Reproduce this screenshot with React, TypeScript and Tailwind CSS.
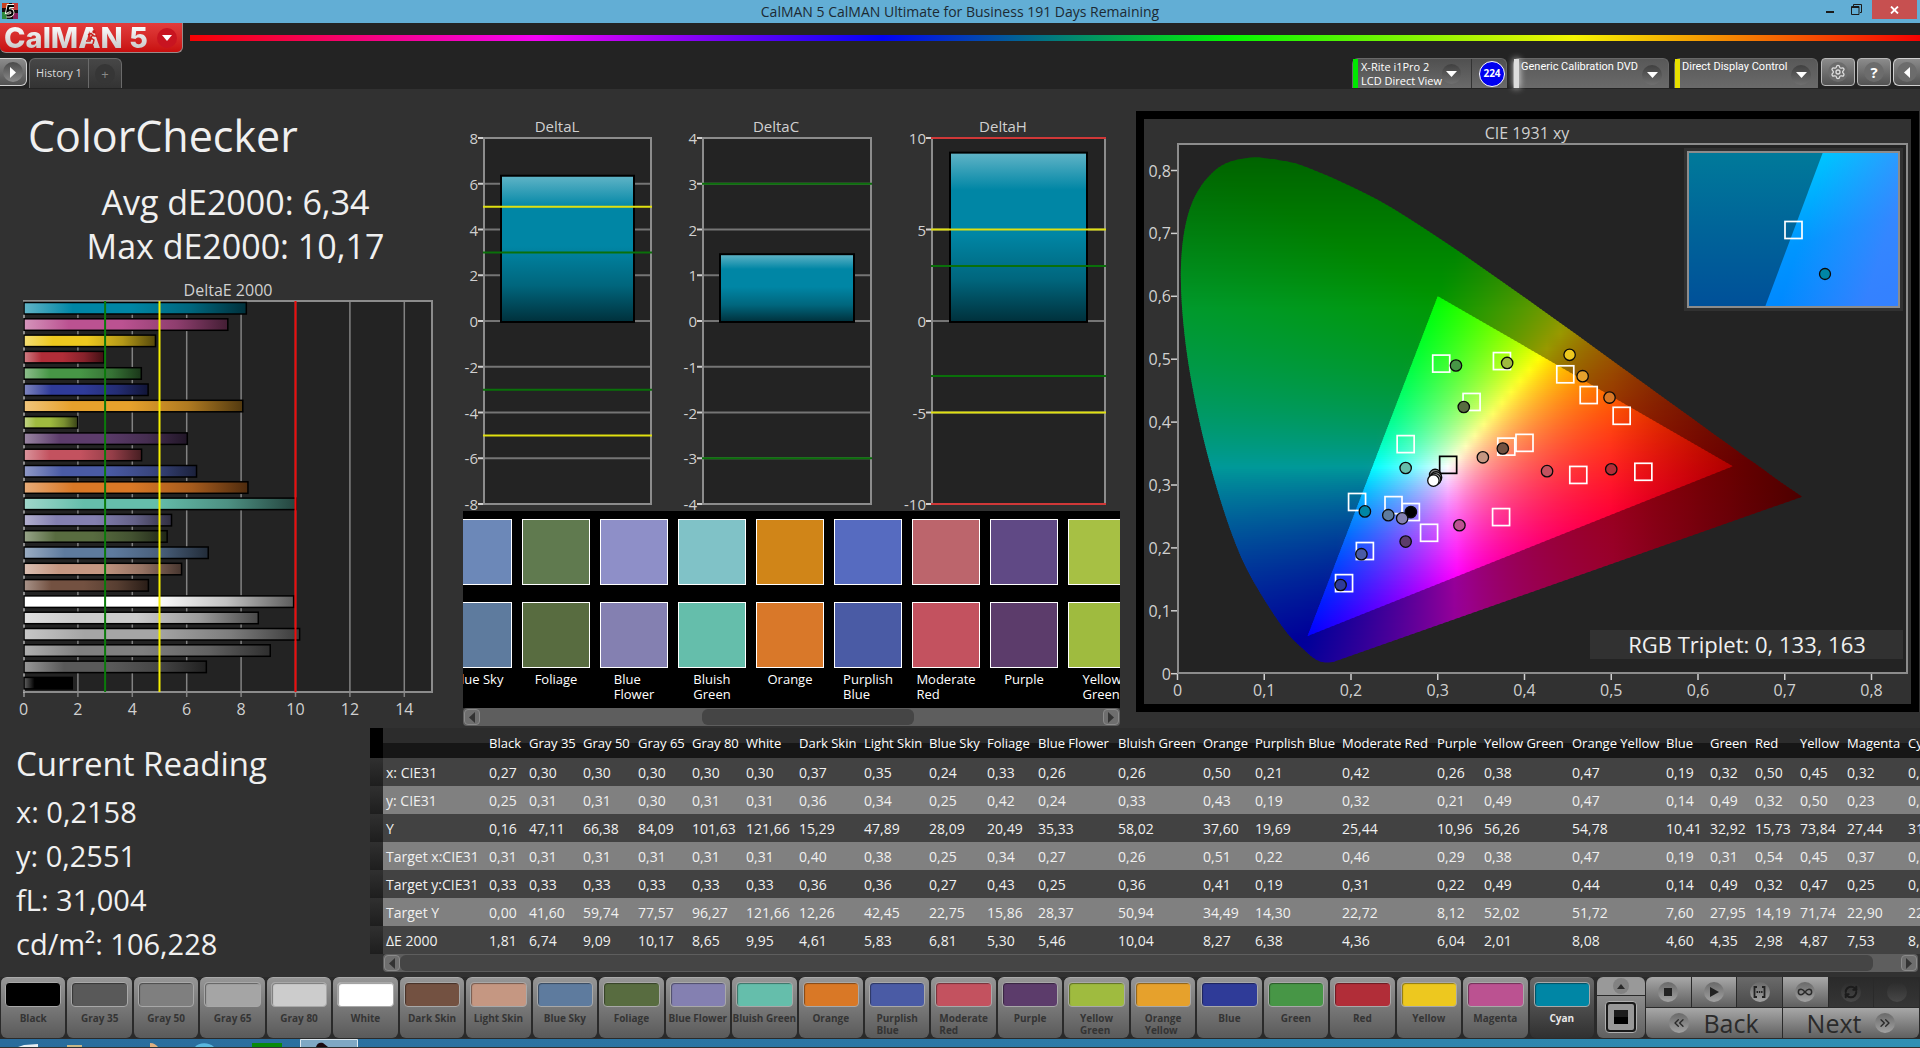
import type { ReactNode } from 'react';
import { ChevronsLeft, ChevronsRight, Infinity as InfinityIcon, RefreshCw, Settings } from 'lucide-react';

type Patch = {
    name: string;
    color: string;
    // x, y, Y, target x, target y, target Y, dE2000
    values: string[];
};

const PATCHES: Patch[] = [
    { name: 'Black', color: '#000000', values: ['0,27', '0,25', '0,16', '0,31', '0,33', '0,00', '1,81'] },
    { name: 'Gray 35', color: '#595959', values: ['0,30', '0,31', '47,11', '0,31', '0,33', '41,60', '6,74'] },
    { name: 'Gray 50', color: '#7f7f7f', values: ['0,30', '0,31', '66,38', '0,31', '0,33', '59,74', '9,09'] },
    { name: 'Gray 65', color: '#a5a5a5', values: ['0,30', '0,30', '84,09', '0,31', '0,33', '77,57', '10,17'] },
    { name: 'Gray 80', color: '#cccccc', values: ['0,30', '0,31', '101,63', '0,31', '0,33', '96,27', '8,65'] },
    { name: 'White', color: '#ffffff', values: ['0,30', '0,31', '121,66', '0,31', '0,33', '121,66', '9,95'] },
    { name: 'Dark Skin', color: '#735141', values: ['0,37', '0,36', '15,29', '0,40', '0,36', '12,26', '4,61'] },
    { name: 'Light Skin', color: '#c59782', values: ['0,35', '0,34', '47,89', '0,38', '0,36', '42,45', '5,83'] },
    { name: 'Blue Sky', color: '#5e7b9e', values: ['0,24', '0,25', '28,09', '0,25', '0,27', '22,75', '6,81'] },
    { name: 'Foliage', color: '#586c40', values: ['0,33', '0,42', '20,49', '0,34', '0,43', '15,86', '5,30'] },
    { name: 'Blue Flower', color: '#8480b1', values: ['0,26', '0,24', '35,33', '0,27', '0,25', '28,37', '5,46'] },
    { name: 'Bluish Green', color: '#65beab', values: ['0,26', '0,33', '58,02', '0,26', '0,36', '50,94', '10,04'] },
    { name: 'Orange', color: '#d97826', values: ['0,50', '0,43', '37,60', '0,51', '0,41', '34,49', '8,27'] },
    { name: 'Purplish Blue', color: '#4a5ba5', values: ['0,21', '0,19', '19,69', '0,22', '0,19', '14,30', '6,38'] },
    { name: 'Moderate Red', color: '#c3525f', values: ['0,42', '0,32', '25,44', '0,46', '0,31', '22,72', '4,36'] },
    { name: 'Purple', color: '#5c3c6b', values: ['0,26', '0,21', '10,96', '0,29', '0,22', '8,12', '6,04'] },
    { name: 'Yellow Green', color: '#9fbb3f', values: ['0,38', '0,49', '56,26', '0,38', '0,49', '52,02', '2,01'] },
    { name: 'Orange Yellow', color: '#e6a12c', values: ['0,47', '0,47', '54,78', '0,47', '0,44', '51,72', '8,08'] },
    { name: 'Blue', color: '#2f3b98', values: ['0,19', '0,14', '10,41', '0,19', '0,14', '7,60', '4,60'] },
    { name: 'Green', color: '#479646', values: ['0,32', '0,49', '32,92', '0,31', '0,49', '27,95', '4,35'] },
    { name: 'Red', color: '#b12d38', values: ['0,50', '0,32', '15,73', '0,54', '0,32', '14,19', '2,98'] },
    { name: 'Yellow', color: '#edc81f', values: ['0,45', '0,50', '73,84', '0,45', '0,47', '71,74', '4,87'] },
    { name: 'Magenta', color: '#bb5291', values: ['0,32', '0,23', '27,44', '0,37', '0,25', '22,90', '7,53'] },
    { name: 'Cyan', color: '#0086a5', values: ['0,22', '0,26', '31,00', '0,21', '0,27', '22,97', '8,21'] },
];

const COLUMN_WIDTHS = [
    'w-[40px]', 'w-[54px]', 'w-[55px]', 'w-[54px]', 'w-[54px]', 'w-[53px]', 'w-[65px]', 'w-[65px]',
    'w-[58px]', 'w-[51px]', 'w-[80px]', 'w-[85px]', 'w-[52px]', 'w-[87px]', 'w-[95px]', 'w-[47px]',
    'w-[88px]', 'w-[94px]', 'w-[44px]', 'w-[45px]', 'w-[45px]', 'w-[47px]', 'w-[61px]', 'w-[60px]',
];

const ROW_LABELS = ['x: CIE31', 'y: CIE31', 'Y', 'Target x:CIE31', 'Target y:CIE31', 'Target Y', 'ΔE 2000'];

const toNumber = (value: string) => Number(value.replace(',', '.'));

/* ---------- shared bits ---------- */

const Disc = ({ children, dark = false }: { children?: ReactNode; dark?: boolean }) => (
    <span
        className={
            dark
                ? 'flex size-5 items-center justify-center rounded-full bg-linear-to-b from-[#2c2c2c] to-[#484848] text-[#1c1c1c]'
                : 'flex size-5 items-center justify-center rounded-full bg-linear-to-b from-[#6a6a6a] to-[#a2a2a2] text-[#2a2a2a]'
        }
    >
        {children}
    </span>
);

const DownArrow = () => (
    <span className="flex size-5 items-center justify-center rounded-full bg-linear-to-b from-[#404040] to-[#707070]">
        <svg width="11" height="6" viewBox="0 0 11 6">
            <path d="M0 0h11L5.500 6z" fill="#fff" />
        </svg>
    </span>
);

const ScrollArrow = ({ flip = false, label }: { flip?: boolean; label: string }) => (
    <button
        type="button"
        aria-label={label}
        className="flex h-4 w-4 items-center justify-center rounded border border-[#8a8a8a] bg-[#6e6e6e]"
    >
        <svg width="6" height="11" viewBox="0 0 6 11">
            <path d={flip ? 'M0 0v11l6-5.500z' : 'M6 0v11L0 5.500z'} fill="#333" />
        </svg>
    </button>
);

/* ---------- title bar and header ---------- */

const TitleBar = () => (
    <div className="relative flex h-[23px] items-center justify-end bg-[#62aed5]">
        <svg className="absolute left-0.5 top-[3px]" width="16" height="16" viewBox="0 0 16 16">
            <rect width="16" height="16" fill="#1a0d0d" />
            <path d="M0 0h7v5H0z" fill="#c8401e" />
            <path d="M10 0h6v7h-6z" fill="#c23a3a" />
            <path d="M0 9h5v7H0z" fill="#2b8a3a" />
            <path d="M11 10h5v6h-5z" fill="#8a1f5a" />
            <path d="M12 3H6.500L5.500 8c3-1.500 5-.5 5 1.700S8 13 4.500 12.300" fill="none" stroke="#f4f4ea" strokeWidth="4" />
            <path d="M12 3H6.500L5.500 8c3-1.500 5-.5 5 1.700S8 13 4.500 12.300" fill="none" stroke="#000" strokeWidth="2.200" />
        </svg>
        <h1 className="absolute inset-x-0 text-center text-[14px] leading-[22px] text-[#1c2a33]">
            CalMAN 5 CalMAN Ultimate for Business 191 Days Remaining
        </h1>
        <div className="relative flex h-full items-start">
            <button type="button" aria-label="Minimize" className="flex h-[19px] w-6 items-center justify-center">
                <span className="mt-1 h-0.5 w-2 bg-[#1b1b1b]" />
            </button>
            <button type="button" aria-label="Restore" className="mr-0.5 flex h-[19px] w-7 items-center justify-center">
                <svg width="11" height="11" viewBox="0 0 11 11" fill="none" stroke="#1b1b1b">
                    <path d="M2.500 2V.5h8v8H9" />
                    <path d="M.5 2.500h7.500v8H.5z" />
                    <path d="M.5 3.500h7.500" />
                </svg>
            </button>
            <button type="button" aria-label="Close" className="mr-[3px] flex h-[19px] w-[45px] items-center justify-center bg-[#c75050]">
                <svg width="9" height="8" viewBox="0 0 9 8" stroke="#fff" strokeWidth="1.800">
                    <path d="M1 .5l7 7M8 .5l-7 7" />
                </svg>
            </button>
        </div>
    </div>
);

const Logo = () => (
    <button
        type="button"
        aria-label="CalMAN 5 menu"
        className="flex h-[30px] w-[183px] items-center justify-between rounded-b-md border-b border-r border-[#9a8a8a] bg-linear-to-b from-[#e23c3c] to-[#c80d0d] pl-1 pr-[5px]"
    >
        <span className="relative whitespace-nowrap bg-linear-to-b from-white to-[#c4c4c4] bg-clip-text font-[Inter] text-[29px] font-extrabold leading-[26px] text-transparent">
            CalMAN 5
            <svg className="absolute left-[82px] top-[5px]" width="12" height="14" viewBox="0 0 12 14">
                <circle cx="8" cy="1.800" r="1.700" fill="#c8201c" />
                <path d="M7 4L5 8l3 2-1 4M5 8l-1 3H0M2 5l3-1.500L8 6h3" fill="none" stroke="#c8201c" strokeWidth="1.500" />
            </svg>
        </span>
        <span className="flex size-5 items-center justify-center rounded-full bg-[#c81420]">
            <svg width="10" height="6" viewBox="0 0 10 6">
                <path d="M0 0h10L5 6z" fill="#fff" />
            </svg>
        </span>
    </button>
);

const SourceSelect = ({ name, bar, width }: { name: string; bar: string; width: string }) => (
    <div
        className={`relative flex h-[30px] items-start rounded-t-md border border-b-0 border-[#686868] bg-linear-to-b from-[#585858] to-[#6a6a6a] ${width}`}
    >
        <span className={`h-full w-[5px] ${bar}`} />
        <select
            aria-label={name}
            className="h-4 flex-1 appearance-none whitespace-nowrap bg-transparent pl-0.5 font-[Roboto] text-[11px] leading-4 text-white outline-none"
        >
            <option>{name}</option>
        </select>
        <span className="pointer-events-none absolute right-1.5 top-1.5">
            <DownArrow />
        </span>
    </div>
);

const ToolButton = ({ label, children }: { label: string; children: ReactNode }) => (
    <button
        type="button"
        aria-label={label}
        className="flex h-7 w-[34px] items-center justify-center rounded border border-[#b8b8b8] bg-linear-to-b from-[#8c8c8c] to-[#525252]"
    >
        {children}
    </button>
);

const Header = () => (
    <header className="bg-[#232323]">
        <div className="flex h-[35px] items-start">
            <Logo />
            <div className="ml-[7px] mt-3 h-1.5 flex-1 bg-[linear-gradient(90deg,#ff0000_0%,#ff00ff_20%,#0000ff_40%,#00ff00_60%,#ffff00_80%,#ff0000_100%)] opacity-95" />
        </div>
        <div className="flex h-[31px] items-start justify-between">
            <div className="flex items-start">
                <button
                    type="button"
                    aria-label="Expand"
                    className="flex h-7 w-[27px] items-center justify-center rounded-r-md border border-l-0 border-[#d0d0d0] bg-linear-to-b from-[#8c8c8c] to-[#525252]"
                >
                    <span className="flex size-5 items-center justify-center rounded-full bg-linear-to-b from-[#4a4a4a] to-[#8c8c8c]">
                        <svg width="6" height="11" viewBox="0 0 6 11">
                            <path d="M0 0v11l6-5.500z" fill="#fff" />
                        </svg>
                    </span>
                </button>
                <div className="ml-0.5 flex h-[30px] rounded-t-md border border-b-0 border-[#6a6a6a] bg-linear-to-b from-[#474747] to-[#333]">
                    <button type="button" className="w-[58px] whitespace-nowrap text-[11px] text-[#dcdcdc]">
                        History 1
                    </button>
                    <button type="button" aria-label="Add history" className="flex w-[33px] items-center justify-center border-l border-[#6a6a6a]">
                        <span className="flex size-5 items-center justify-center rounded-full bg-[#363636] text-[13px] leading-5 text-[#888]">+</span>
                    </button>
                </div>
            </div>
            <div className="flex items-start">
                <div className="flex h-[30px] w-[155px] items-center rounded-t-md border border-b-0 border-[#686868] bg-linear-to-b from-[#505050] to-[#6a6a6a]">
                    <span className="h-full w-[5px] bg-[#00e800]" />
                    <button type="button" className="flex h-full w-[114px] items-center justify-between border-r border-[#333] pl-[3px] pr-2.5 text-left text-[11px] leading-[14px] text-white">
                        <span className="whitespace-nowrap">
                            X-Rite i1Pro 2<br />
                            LCD Direct View
                        </span>
                        <DownArrow />
                    </button>
                    <span className="ml-[7px] flex size-[26px] items-center justify-center rounded-full border border-white bg-[#0000f0] text-[10px] font-bold text-white">
                        224
                    </span>
                </div>
                <div className="ml-1.5">
                    <SourceSelect name="Generic Calibration DVD" bar="bg-[#dedede] shadow-[0_0_7px_#ffffff]" width="w-[156px]" />
                </div>
                <div className="ml-[5px]">
                    <SourceSelect name="Direct Display Control" bar="bg-[#e8e000]" width="w-[144px]" />
                </div>
                <div className="ml-[3px] flex gap-0.5">
                    <ToolButton label="Settings">
                        <span className="flex size-5 items-center justify-center rounded-full bg-[#6c6c6c]">
                            <Settings className="size-4 text-[#dcdcdc]" strokeWidth={2} />
                        </span>
                    </ToolButton>
                    <ToolButton label="Help">
                        <span className="flex size-5 items-center justify-center rounded-full bg-[#6c6c6c] text-[15px] font-bold leading-5 text-white">?</span>
                    </ToolButton>
                    <button
                        type="button"
                        aria-label="Collapse"
                        className="flex h-7 w-[27px] items-center justify-center rounded-l-md border border-r-0 border-[#d0d0d0] bg-linear-to-b from-[#8c8c8c] to-[#525252]"
                    >
                        <span className="flex size-5 items-center justify-center rounded-full bg-[#6c6c6c]">
                            <svg width="6" height="11" viewBox="0 0 6 11">
                                <path d="M6 0v11L0 5.500z" fill="#fff" />
                            </svg>
                        </span>
                    </button>
                </div>
            </div>
        </div>
    </header>
);

/* ---------- bar charts ---------- */

const mix = (hex: string, target: number, amount: number) => {
    const n = parseInt(hex.slice(1), 16);
    const c = [n >> 16, (n >> 8) & 255, n & 255].map((v) => Math.round(v + (target - v) * amount));
    return `rgb(${c.join(',')})`;
};

const BarStops = ({ color }: { color: string }) => (
    <>
        <stop offset="0" stopColor={mix(color, 255, 0.38)} />
        <stop offset="0.220" stopColor={color} />
        <stop offset="0.480" stopColor={color} />
        <stop offset="0.750" stopColor={mix(color, 0, 0.24)} />
        <stop offset="1" stopColor={mix(color, 0, 0.64)} />
    </>
);

const DeltaEChart = () => {
    const bars = [...PATCHES].reverse();
    const X = (v: number) => 23.5 + v * 27.2;
    return (
        <svg className="mt-2 w-[440px] overflow-visible" viewBox="0 0 440 451" role="img" aria-label="DeltaE 2000 chart">
            <defs>
                {bars.map((b, i) => (
                    <linearGradient key={b.name} id={`de-${i}`}>
                        <BarStops color={b.color} />
                    </linearGradient>
                ))}
            </defs>
            <text x="228" y="19" textAnchor="middle" fontSize="16" fill="#d0d0d0">DeltaE 2000</text>
            <rect x="24" y="24" width="408" height="391" fill="#232323" />
            {[2, 4, 6, 8, 10, 12, 14].map((v) => (
                <line key={v} x1={X(v)} x2={X(v)} y1="24" y2="420" stroke="#828282" strokeWidth="1.500" />
            ))}
            <rect x="24" y="24" width="408" height="391" fill="none" stroke="#8c8c8c" strokeWidth="2" />
            <line x1="24" x2="24" y1="415" y2="420" stroke="#c8c8c8" />
            {bars.map((b, i) => (
                <rect
                    key={b.name}
                    x="24"
                    y={25.500 + i * 16.3}
                    width={toNumber(b.values[6]) * 27.2 - 1}
                    height="11.500"
                    fill={`url(#de-${i})`}
                    stroke="#000"
                    strokeWidth="1.500"
                />
            ))}
            <line x1={X(3)} x2={X(3)} y1="24" y2="415" stroke="#0a7a0a" strokeWidth="2" />
            <line x1={X(5)} x2={X(5)} y1="24" y2="415" stroke="#f5f000" strokeWidth="2" />
            <line x1={X(10)} x2={X(10)} y1="24" y2="415" stroke="#f00a0a" strokeWidth="2" />
            {[0, 2, 4, 6, 8, 10, 12, 14].map((v) => (
                <text key={v} x={X(v)} y="438" textAnchor="middle" fontSize="16" fill="#d0d0d0">{v}</text>
            ))}
        </svg>
    );
};

type DeltaPlotProps = {
    title: string;
    left: number;
    right: number;
    titleX: number;
    max: number;
    step: number;
    value: number;
    pad: number;
};

const DELTA_PLOTS: DeltaPlotProps[] = [
    { title: 'DeltaL', left: 29, right: 196, titleX: 102, max: 8, step: 2, value: 6.35, pad: 17 },
    { title: 'DeltaC', left: 248, right: 416, titleX: 321, max: 4, step: 1, value: 1.46, pad: 17 },
    { title: 'DeltaH', left: 477, right: 650, titleX: 548, max: 10, step: 5, value: 9.2, pad: 18 },
];

const DeltaPlot = ({ title, left, right, titleX, max, step, value, pad }: DeltaPlotProps) => {
    const Y = (v: number) => 232 - (v / max) * 183;
    const ticks: number[] = [];
    for (let t = -max; t <= max; t += step) ticks.push(t);
    const limits = [
        { at: 3, color: '#0a700a' },
        { at: 5, color: '#e0e010' },
        { at: 10, color: '#d03838' },
    ].filter((l) => l.at <= max);
    return (
        <g>
            <text x={titleX} y="43" textAnchor="middle" fontSize="15" fill="#d0d0d0">{title}</text>
            <rect x={left} y="49" width={right - left} height="366" fill="#232323" />
            {ticks.map((t) => (
                <g key={t}>
                    <line x1={left} x2={right} y1={Y(t)} y2={Y(t)} stroke="#757575" strokeWidth="2" />
                    <line x1={left - 6} x2={left} y1={Y(t)} y2={Y(t)} stroke="#d0d0d0" strokeWidth="2" />
                    <text x={left - 6} y={Y(t) + 6} textAnchor="end" fontSize="15" fill="#d0d0d0">{t}</text>
                </g>
            ))}
            <rect x={left} y="49" width={right - left} height="366" fill="none" stroke="#8c8c8c" strokeWidth="2" />
            <rect
                x={left + pad}
                y={Y(value)}
                width={right - left - pad * 2}
                height={233 - Y(value)}
                fill="url(#delta-bar)"
                stroke="#000"
                strokeWidth="2"
            />
            {limits.flatMap((l) => [l.at, -l.at].map((v) => (
                <line key={v} x1={left - 1} x2={right + 1} y1={Y(v)} y2={Y(v)} stroke={l.color} strokeWidth="2" />
            )))}
        </g>
    );
};

const DeltaCharts = () => (
    <svg className="w-full overflow-visible" viewBox="0 0 673 422" role="img" aria-label="Delta L, C and H charts">
        <defs>
            <linearGradient id="delta-bar" x1="0" y1="0" x2="0" y2="1">
                <BarStops color="#0086a5" />
            </linearGradient>
        </defs>
        {DELTA_PLOTS.map((p) => <DeltaPlot key={p.title} {...p} />)}
    </svg>
);

/* ---------- swatch strip ---------- */

const SWATCHES = [
    { lines: ['Blue Sky'], target: '#6c88b8', actual: '#5e7b9e' },
    { lines: ['Foliage'], target: '#607a4f', actual: '#586c40' },
    { lines: ['Blue', 'Flower'], target: '#8e8fc8', actual: '#8480b1' },
    { lines: ['Bluish', 'Green'], target: '#80c2c7', actual: '#65beab' },
    { lines: ['Orange'], target: '#d08518', actual: '#d97829' },
    { lines: ['Purplish', 'Blue'], target: '#566bc0', actual: '#4a5ba5' },
    { lines: ['Moderate', 'Red'], target: '#bc656c', actual: '#c3525f' },
    { lines: ['Purple'], target: '#604985', actual: '#5c3c6b' },
    { lines: ['Yellow', 'Green'], target: '#a7c044', actual: '#9fbb3f' },
];

const SwatchStrip = () => (
    <div className="mx-2">
        <div className="h-[197px] overflow-hidden bg-black pt-2">
            <div className="-ml-[19px] flex gap-2.5">
                {SWATCHES.map((s) => (
                    <div key={s.lines.join(' ')} className="flex w-[68px] shrink-0 flex-col items-center">
                        <div className="h-[66px] w-full border border-white" style={{ backgroundColor: s.target }} />
                        <div className="mt-[17px] h-[66px] w-full border border-white" style={{ backgroundColor: s.actual }} />
                        <div className="mt-1 text-[13px] font-medium leading-[15px] text-white">
                            {s.lines.map((l) => <div key={l} className="whitespace-nowrap">{l}</div>)}
                        </div>
                    </div>
                ))}
            </div>
        </div>
        <div className="flex h-[18px] items-center justify-between rounded bg-[#5e5e5e] px-px">
            <ScrollArrow label="Scroll swatches left" />
            <div className="ml-8 h-4 w-[212px] rounded-md bg-[#454545]" />
            <ScrollArrow flip label="Scroll swatches right" />
        </div>
    </div>
);

/* ---------- CIE 1931 diagram ---------- */

const cx = (x: number) => 33.5 + x * 867.5;
const cy = (y: number) => 554.7 - y * 629;

const LOCUS: [number, number][] = [
    [0.18, 0.019], [0.17, 0.018], [0.159, 0.023], [0.146, 0.038], [0.124, 0.069], [0.0913, 0.138], [0.0687, 0.2007],
    [0.0454, 0.295], [0.0235, 0.4127], [0.0082, 0.5384], [0.0042, 0.6548], [0.0155, 0.744], [0.043, 0.8],
    [0.078, 0.8195], [0.116, 0.8165], [0.1547, 0.802], [0.2296, 0.7543], [0.3016, 0.6923], [0.3731, 0.6245],
    [0.4441, 0.5547], [0.5125, 0.4866], [0.5752, 0.4242], [0.627, 0.3725], [0.6658, 0.334], [0.6915, 0.3083],
    [0.72, 0.2815],
];

// Catmull-Rom through the locus points, closed by the purple line
const locusPath = () => {
    const p = LOCUS.map(([x, y]) => [cx(x), cy(y)]);
    let d = `M${p[0][0]} ${p[0][1]}`;
    for (let i = 0; i < p.length - 1; i++) {
        const a = p[Math.max(i - 1, 0)];
        const b = p[i];
        const c = p[i + 1];
        const e = p[Math.min(i + 2, p.length - 1)];
        d += `C${b[0] + (c[0] - a[0]) / 6} ${b[1] + (c[1] - a[1]) / 6} ${c[0] - (e[0] - b[0]) / 6} ${c[1] - (e[1] - b[1]) / 6} ${c[0]} ${c[1]}`;
    }
    return `${d}Z`;
};

const chromaColor = (x: number, y: number, dim: number) => {
    const yy = Math.max(y, 0.004);
    const X = x / yy;
    const Z = (1 - x - yy) / yy;
    const rgb = [
        3.2406 * X - 1.5372 - 0.4986 * Z,
        -0.9689 * X + 1.8758 + 0.0415 * Z,
        0.0557 * X - 0.204 + 1.057 * Z,
    ].map((v) => Math.max(v, 0));
    const top = Math.max(...rgb);
    const red = 1 - Math.max(0, (x - 0.5) / 0.22) * 0.5;
    const green = 1 - Math.max(0, (y - 0.58) / 0.24) * 0.35;
    return `rgb(${rgb.map((v) => Math.round((v / top) * 255 * dim * red * green)).join(',')})`;
};

type FieldProps = { id: string; x0: number; x1: number; y0: number; y1: number; dim: number; clip: string };

// Horizontal strips, each with its own gradient, make up the colour field
const ColorField = ({ id, x0, x1, y0, y1, dim, clip }: FieldProps) => {
    const rows: number[] = [];
    for (let py = Math.floor(cy(y1)); py < cy(y0); py += 2) rows.push(py);
    const steps = 48;
    return (
        <g clipPath={`url(#${clip})`}>
            {rows.map((py) => {
                const y = (554.7 - py - 1) / 629;
                return (
                    <g key={py}>
                        <linearGradient id={`${id}-${py}`}>
                            {Array.from({ length: steps + 1 }, (_, i) => (
                                <stop key={i} offset={i / steps} stopColor={chromaColor(x0 + ((x1 - x0) * i) / steps, y, dim)} />
                            ))}
                        </linearGradient>
                        <rect x={cx(x0)} y={py} width={cx(x1) - cx(x0)} height="3" fill={`url(#${id}-${py})`} />
                    </g>
                );
            })}
        </g>
    );
};

const TARGETS = [
    [0.304, 0.493], [0.374, 0.497], [0.447, 0.476], [0.474, 0.443], [0.512, 0.41], [0.339, 0.432], [0.263, 0.365],
    [0.379, 0.361], [0.4, 0.367], [0.462, 0.316], [0.537, 0.321], [0.207, 0.273], [0.249, 0.268], [0.269, 0.257],
    [0.373, 0.249], [0.29, 0.224], [0.216, 0.195], [0.192, 0.144],
];

const READINGS: [number, number, string][] = [
    [0.321, 0.49, '#479646'], [0.38, 0.494, '#9fbb3f'], [0.452, 0.507, '#edc81f'], [0.467, 0.473, '#e6a12c'],
    [0.498, 0.439, '#d97826'], [0.33, 0.424, '#586c40'], [0.375, 0.358, '#735141'], [0.352, 0.344, '#c59782'],
    [0.426, 0.322, '#c3525f'], [0.5, 0.325, '#b12d38'], [0.263, 0.327, '#65beab'], [0.297, 0.316, '#888888'],
    [0.298, 0.312, '#aaaaaa'], [0.297, 0.309, '#cccccc'], [0.295, 0.307, '#ffffff'], [0.216, 0.258, '#0086a5'],
    [0.269, 0.257, '#000000'], [0.243, 0.252, '#5e7b9e'], [0.259, 0.247, '#8480b1'], [0.325, 0.236, '#bb5291'],
    [0.263, 0.21, '#5c3c6b'], [0.212, 0.19, '#4a5ba5'], [0.188, 0.141, '#2f3b98'],
];

const Target = ({ x, y, color = '#fff' }: { x: number; y: number; color?: string }) => (
    <rect x={x - 8.5} y={y - 8.5} width="17" height="17" fill="none" stroke={color} strokeWidth="1.700" />
);

const CieChart = () => {
    const label = (v: number) => (v === 0 ? '0' : `0,${v}`);
    return (
        <section className="mt-[22px] mr-px flex-1 self-start bg-black p-2">
            <svg className="w-full bg-[#313131]" viewBox="0 0 767 585" role="img" aria-label="CIE 1931 xy diagram">
                <defs>
                    <clipPath id="locus"><path d={locusPath()} /></clipPath>
                    <clipPath id="gamut">
                        <path d={`M${cx(0.3)} ${cy(0.6)}L${cx(0.64)} ${cy(0.33)}L${cx(0.15)} ${cy(0.06)}z`} />
                    </clipPath>
                    <linearGradient id="inset-out" x1="0" y1="0" x2="0" y2="1">
                        <stop offset="0" stopColor="#007a9a" />
                        <stop offset="0.500" stopColor="#006499" />
                        <stop offset="1" stopColor="#005099" />
                    </linearGradient>
                    <linearGradient id="inset-in" x1="0.300" y1="0" x2="0.550" y2="1">
                        <stop offset="0" stopColor="#00c8ff" />
                        <stop offset="0.550" stopColor="#0096ff" />
                        <stop offset="1" stopColor="#0084ff" />
                    </linearGradient>
                    <linearGradient id="inset-side" x1="0.200" y1="0" x2="1" y2="0.300">
                        <stop offset="0.300" stopColor="#5090ff" stopOpacity="0" />
                        <stop offset="1" stopColor="#5080ff" stopOpacity="0.650" />
                    </linearGradient>
                </defs>
                <text x="383" y="20" textAnchor="middle" fontSize="16" fill="#d0d0d0">CIE 1931 xy</text>
                <rect x="34" y="25" width="729" height="529" fill="#232323" />
                <ColorField id="out" x0={0} x1={0.73} y0={0.01} y1={0.83} dim={0.6} clip="locus" />
                <ColorField id="in" x0={0.145} x1={0.645} y0={0.055} y1={0.605} dim={1} clip="gamut" />
                <rect x="34" y="25" width="729" height="529" fill="none" stroke="#8c8c8c" strokeWidth="2" />
                {[0, 1, 2, 3, 4, 5, 6, 7, 8].map((v) => (
                    <g key={v} fill="#d0d0d0" fontSize="16">
                        <line x1={cx(v / 10)} x2={cx(v / 10)} y1="555" y2="561" stroke="#d0d0d0" strokeWidth="1.500" />
                        <text x={cx(v / 10)} y="577" textAnchor="middle">{label(v)}</text>
                        <line x1="27" x2="33" y1={cy(v / 10)} y2={cy(v / 10)} stroke="#d0d0d0" strokeWidth="1.500" />
                        <text x="27" y={cy(v / 10) + 6} textAnchor="end">{label(v)}</text>
                    </g>
                ))}
                {TARGETS.map(([x, y]) => <Target key={`${x}-${y}`} x={cx(x)} y={cy(y)} />)}
                <Target x={cx(0.312)} y={cy(0.332)} color="#000" />
                {READINGS.map(([x, y, fill]) => (
                    <circle key={`${x}-${y}`} cx={cx(x)} cy={cy(y)} r="5.700" fill={fill} stroke="#0a0a0a" strokeWidth="1.300" />
                ))}

                {/* magnified view of the current patch */}
                <rect x="540" y="29" width="219" height="163" fill="#313131" />
                <rect x="544" y="33" width="211" height="155" fill="url(#inset-out)" />
                <path d="M679 33H755V188H621z" fill="url(#inset-in)" />
                <path d="M679 33H755V188H621z" fill="url(#inset-side)" />
                <rect x="544" y="33" width="211" height="155" fill="none" stroke="#8c8c8c" strokeWidth="2" />
                <Target x={649.5} y={111} />
                <circle cx="681" cy="155" r="5.500" fill="#0086a5" stroke="#0a0a0a" strokeWidth="1.300" />

                <rect x="446" y="511" width="313" height="29" fill="#313131" />
                <text x="603" y="534" textAnchor="middle" fontSize="22" fill="#f0f0f0">RGB Triplet: 0, 133, 163</text>
            </svg>
        </section>
    );
};

/* ---------- lower section ---------- */

const CurrentReading = () => (
    <section className="w-[370px] shrink-0 pl-4 pt-3.5 text-[29px] leading-[44px] text-[#f0f0f0]">
        <h2 className="mb-1 text-[33px]">Current Reading</h2>
        <p>x: 0,2158</p>
        <p>y: 0,2551</p>
        <p>fL: 31,004</p>
        <p>cd/m²: 106,228</p>
    </section>
);

const ReadingsTable = () => (
    <section className="min-w-0 flex-1 overflow-hidden">
        <div className="overflow-hidden">
            <table className="w-[1535px] table-fixed border-collapse text-left text-[14px] text-[#f0f0f0]">
                <colgroup>
                    <col className="w-[13px]" />
                    <col className="w-[103px]" />
                    {COLUMN_WIDTHS.map((w, i) => <col key={i} className={w} />)}
                </colgroup>
                <thead>
                    <tr className="h-[30px] bg-linear-to-b from-[#2c2c2c] from-50% to-[#161616] to-50%">
                        <td className="bg-black" />
                        <td />
                        {PATCHES.map((p) => (
                            <th key={p.name} scope="col" className="whitespace-nowrap pl-[3px] pt-0.5 text-[13px] font-normal text-white">{p.name}</th>
                        ))}
                    </tr>
                </thead>
                <tbody>
                    {ROW_LABELS.map((label, row) => (
                        <tr key={label} className={row % 2 ? 'h-7 bg-[#808080]' : 'h-7 bg-[#424242]'}>
                            <td className="bg-linear-to-b from-[#303030] to-[#1e1e1e]" />
                            <th scope="row" className="whitespace-nowrap pl-[3px] font-normal">{label}</th>
                            {PATCHES.map((p) => (
                                <td key={p.name} className="whitespace-nowrap pl-[3px]">{p.values[row]}</td>
                            ))}
                        </tr>
                    ))}
                </tbody>
            </table>
        </div>
        <div className="ml-[13px] mr-0.5 flex h-[18px] items-center justify-between rounded bg-[#5e5e5e] px-px">
            <ScrollArrow label="Scroll table left" />
            <div className="mr-7 h-4 flex-1 rounded-md bg-[#454545]" />
            <ScrollArrow flip label="Scroll table right" />
        </div>
    </section>
);

/* ---------- bottom bar ---------- */

const TWO_LINES = ['Purplish Blue', 'Moderate Red', 'Yellow Green', 'Orange Yellow'];

const PatchButton = ({ patch, active }: { patch: Patch; active: boolean }) => (
    <button
        type="button"
        aria-pressed={active}
        className={
            active
                ? 'flex min-w-0 flex-col items-center rounded-md border-t border-[#777] bg-linear-to-b from-[#6a6a6a] to-[#303030] px-1 pt-1 text-[#e8e8e8]'
                : 'flex min-w-0 flex-col items-center rounded-md border-t border-[#aaa] bg-linear-to-b from-[#969696] to-[#5a5a5a] px-1 pt-1 text-[#343434]'
        }
    >
        <span className="h-[25px] w-full rounded border border-[#a8a8a8] shadow-[inset_1px_1px_1px_rgba(0,0,0,0.400)]" style={{ backgroundColor: patch.color }} />
        <span className="mt-[5px] text-left text-[10px] font-bold leading-3">
            {TWO_LINES.includes(patch.name)
                ? patch.name.split(' ').map((w) => <span key={w} className="block">{w}</span>)
                : <span className="block whitespace-nowrap">{patch.name}</span>}
        </span>
    </button>
);

const mediaLight = 'flex flex-1 items-center justify-center bg-linear-to-b from-[#a8a8a8] to-[#606060]';
const mediaMid = 'flex flex-1 items-center justify-center bg-linear-to-b from-[#6a6a6a] to-[#4a4a4a]';
const mediaDark = 'flex flex-1 items-center justify-center bg-linear-to-b from-[#2a2a2a] to-[#363636]';
const navButton = 'flex flex-1 items-center justify-center gap-3.5 bg-linear-to-b from-[#a8a8a8] to-[#606060] text-[25px] leading-[30px] text-[#2a2a2a]';

const BottomBar = () => (
    <footer className="flex h-[62px] bg-[#2a2a2a] pb-px">
        <div className="grid flex-1 grid-cols-24 gap-0.5 px-px">
            {PATCHES.map((p) => <PatchButton key={p.name} patch={p} active={p.name === 'Cyan'} />)}
        </div>
        <div className="ml-0.5 flex w-12 flex-col gap-px">
            <button type="button" aria-label="Show more patterns" className="flex h-[18px] items-center justify-center rounded-t-md bg-[#999]">
                <span className="flex size-4 items-center justify-center rounded-full bg-[#828282]">
                    <svg width="8" height="5" viewBox="0 0 8 5">
                        <path d="M0 5h8L4 0z" fill="#2a2a2a" />
                    </svg>
                </span>
            </button>
            <button type="button" aria-label="Pattern window" className="flex flex-1 items-center justify-center rounded-b-md bg-linear-to-b from-[#8c8c8c] to-[#606060]">
                <span className="flex size-8 items-center justify-center rounded border border-[#b0b0b0] bg-[#1a1a1a] p-0.5">
                    <span className="flex size-full items-center justify-center rounded-xs bg-[#989898]">
                        <span className="size-3.5 bg-linear-to-b from-[#1c1c1c] from-50% to-black to-50%" />
                    </span>
                </span>
            </button>
        </div>
        <div className="ml-px mr-px flex w-[273px] flex-col gap-px">
            <div className="flex h-[30px] gap-px overflow-hidden rounded-t-md">
                <button type="button" aria-label="Stop" className={mediaLight}>
                    <Disc><span className="size-2 bg-[#222]" /></Disc>
                </button>
                <button type="button" aria-label="Play" className={mediaLight}>
                    <Disc>
                        <svg width="9" height="10" viewBox="0 0 9 10"><path d="M0 0v10l9-5z" fill="#222" /></svg>
                    </Disc>
                </button>
                <button type="button" aria-label="Read series" className={mediaMid}>
                    <Disc>
                        <svg width="13" height="12" viewBox="0 0 13 12" fill="none" stroke="#222" strokeWidth="1.800">
                            <path d="M4 1H1.500v10H4M9 1h2.500v10H9" />
                            <path d="M3.500 6h6" strokeDasharray="1.500 .8" />
                        </svg>
                    </Disc>
                </button>
                <button type="button" aria-label="Read continuously" className={mediaLight}>
                    <Disc><InfinityIcon className="size-4" strokeWidth={2.2} /></Disc>
                </button>
                <button type="button" aria-label="Refresh" className={mediaDark}>
                    <Disc dark><RefreshCw className="size-3.5" strokeWidth={3.5} /></Disc>
                </button>
                <button type="button" aria-label="Record" className={mediaDark}>
                    <Disc dark />
                </button>
            </div>
            <div className="flex h-[30px] gap-px overflow-hidden rounded-b-md">
                <button type="button" className={navButton}>
                    <Disc><ChevronsLeft className="size-4" /></Disc>
                    Back
                </button>
                <button type="button" className={navButton}>
                    Next
                    <Disc><ChevronsRight className="size-4" /></Disc>
                </button>
            </div>
        </div>
    </footer>
);

const Taskbar = () => (
    <div className="h-2 overflow-hidden bg-linear-to-r from-[#2a6c9c] via-[#2c78a6] to-[#3090b4]">
        <svg width="360" height="8" viewBox="0 0 360 8">
            <path d="M18 8l6-2 14-1v3z" fill="#e8eef2" />
            <path d="M67 8V6h15v2z" fill="#c8b888" />
            <path d="M150 8V4c4 0 6 2 8 4z" fill="#e0b080" />
            <path d="M195 8c4-5 14-5 19 0z" fill="#58b8e0" />
            <path d="M252 4h30v4h-30z" fill="#0a8a0a" />
            <path d="M300.500 8V.5h57V8" fill="#7fa8c4" stroke="#dce8f0" />
            <path d="M316 8c1-4 4-5 7-4l5 4z" fill="#1a0a10" />
        </svg>
    </div>
);

export default function App() {
    return (
        <div className="min-h-screen overflow-hidden bg-[#313131] font-['Open_Sans','Noto_Sans',sans-serif]">
            <TitleBar />
            <Header />
            <main className="pb-[5px]">
                <div className="flex">
                    <section className="w-[455px] shrink-0 pt-[19px] text-[#f0f0f0]">
                        <h2 className="pl-7 text-[43px] leading-[56px]">ColorChecker</h2>
                        <div className="mt-4 pb-px pl-4 text-center text-[34px] leading-[44px]">
                            <p>Avg dE2000: 6,34</p>
                            <p>Max dE2000: 10,17</p>
                        </div>
                        <DeltaEChart />
                    </section>
                    <section className="mr-2 w-[673px] shrink-0">
                        <DeltaCharts />
                        <SwatchStrip />
                    </section>
                    <CieChart />
                </div>
                <div className="flex">
                    <CurrentReading />
                    <ReadingsTable />
                </div>
            </main>
            <BottomBar />
            <Taskbar />
        </div>
    );
}
